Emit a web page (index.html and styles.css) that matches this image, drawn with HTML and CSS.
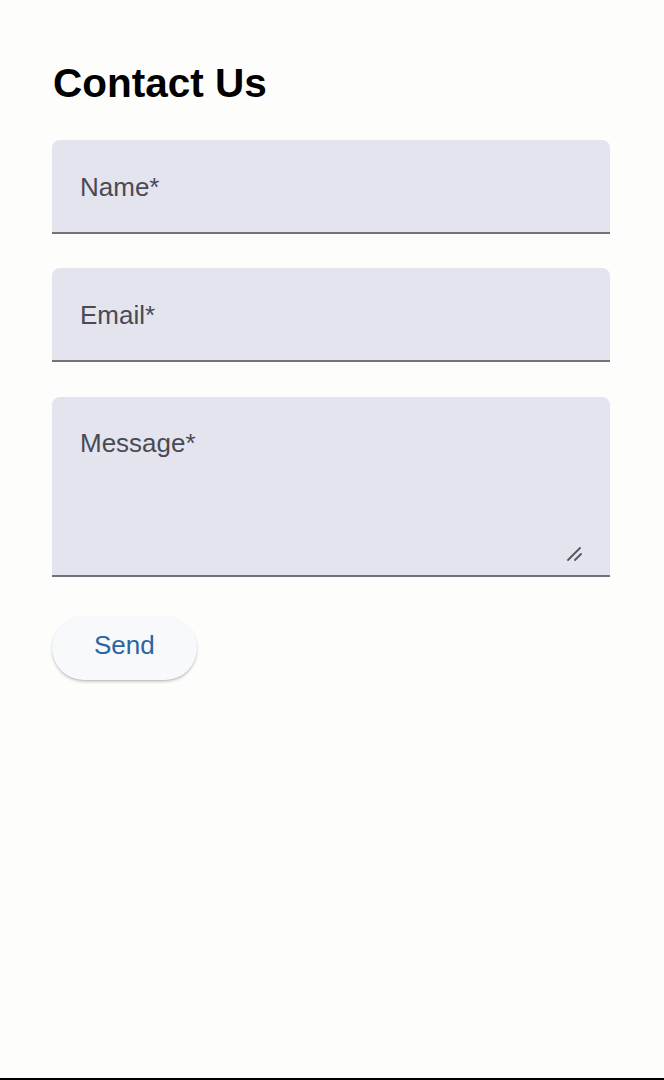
FILE: index.html
```html
<!DOCTYPE html>
<html lang="en">
<head>
<meta charset="utf-8">
<title>Contact Us</title>
<link rel="stylesheet" href="styles.css">
</head>
<body>
<main class="page">
  <h1 class="title">Contact Us</h1>
  <form class="form">
    <div class="field">
      <input class="field-input" type="text" placeholder="Name*">
    </div>
    <div class="field">
      <input class="field-input" type="email" placeholder="Email*">
    </div>
    <div class="field field-area">
      <textarea class="field-textarea" placeholder="Message*"></textarea>
      <svg class="grip" width="16" height="16" viewBox="0 0 16 16" aria-hidden="true">
        <path d="M2 14 L14 2 M9 14 L15 8" stroke="#55555c" stroke-width="1.8" stroke-linecap="round" fill="none"/>
      </svg>
    </div>
    <div class="actions">
      <button class="send" type="button">Send</button>
    </div>
  </form>
</main>
</body>
</html>
```
FILE: styles.css
```css
html {
  background: #000;
}
body {
  margin: 0;
  min-height: 1078px;
  background: #fdfdfc;
  font-family: "Liberation Sans", Arial, sans-serif;
}
.page {
  padding: 60px 54px 0 52px;
}
.title {
  margin: 0;
  font-size: 40.5px;
  line-height: 46px;
  font-weight: 700;
  color: #000;
  padding-left: 1px;
}
.form {
  margin-top: 34px;
  display: flex;
  flex-direction: column;
  gap: 34px;
}
.field {
  background: #e3e4ee;
  border-radius: 8px 8px 0 0;
  border-bottom: 2px solid #72727a;
  padding: 0 26px 0 28px;
}
.field-input,
.field-textarea {
  display: block;
  width: 100%;
  box-sizing: border-box;
  border: 0;
  outline: none;
  background: transparent;
  margin: 0;
  font-family: "Liberation Sans", Arial, sans-serif;
  font-size: 26px;
  line-height: 30px;
  color: #1c1b1f;
}
.field-input {
  padding: 32px 0 30px;
  height: 92px;
}
.field-area {
  position: relative;
  margin-top: 1px;
  padding-bottom: 12px;
}
.field-textarea {
  padding: 31px 0 0;
  height: 166px;
  resize: none;
}
.grip {
  position: absolute;
  right: 28px;
  bottom: 13px;
}
.field-input::placeholder,
.field-textarea::placeholder {
  color: #4a4a54;
  opacity: 1;
}
.actions {
  display: flex;
  margin-top: 5px;
}
.send {
  font-family: "Liberation Sans", Arial, sans-serif;
  font-size: 26px;
  line-height: 30px;
  color: #2a64a3;
  background: #f8f9fb;
  border: 0;
  border-radius: 32px;
  height: 64px;
  padding: 0 42px 7px;
  box-shadow: 0 2px 3px rgba(0, 0, 0, 0.18), 0 1px 1px rgba(0, 0, 0, 0.08);
}
```
